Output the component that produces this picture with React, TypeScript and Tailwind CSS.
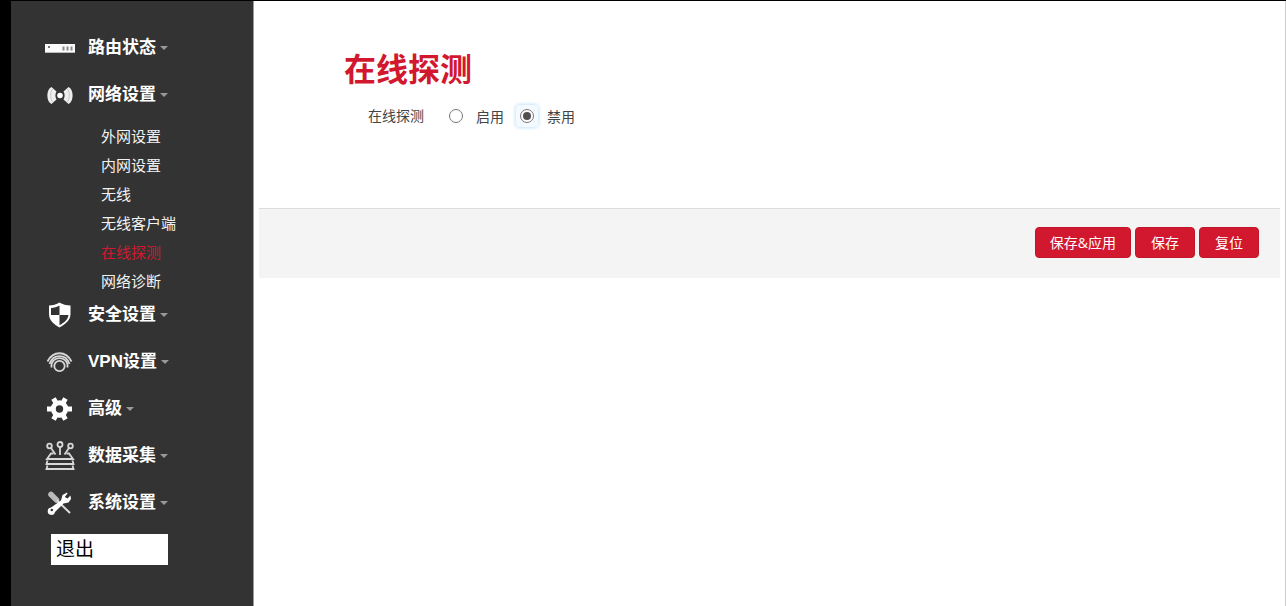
import React from 'react';

const RouterIcon = () => (
  <svg width="30" height="30" viewBox="0 0 30 30">
    <rect x="0" y="11" width="30" height="9" fill="#fafafa" />
    <rect x="3" y="13" width="2" height="2" fill="#777" />
    <path d="M18.500 13.500v4M22.500 13.500v4M26.500 13.500v4" stroke="#888" strokeWidth="2" />
    <path d="M0 19.500h30" stroke="#bbb" />
  </svg>
);

const NetworkIcon = () => (
  <svg width="30" height="30" viewBox="0 0 30 30">
    <circle cx="15" cy="15.500" r="2.800" fill="#fff" />
    <path d="M6.500 7C1 9 1 22 6.500 24L11.500 19.500C10 17 10 14 11.500 11.500Z" fill="#eee" />
    <path d="M23.500 7C29 9 29 22 23.500 24L18.500 19.500C20 17 20 14 18.500 11.500Z" fill="#eee" />
    <path d="M7.500 9C5 12 5 18 7.500 22M22.500 9C25 12 25 18 22.500 22" fill="none" stroke="#bbb" strokeWidth="0.8" />
  </svg>
);

const ShieldIcon = () => (
  <svg width="30" height="30" viewBox="0 0 30 30">
    <path d="M14.500 2.500C11.500 4.500 7.500 5.500 4 5.500V14C4 20.500 9 24.500 14.500 27.500C20 24.500 25.500 20.500 25.500 14V5.500C21.500 5.500 17.500 4.500 14.500 2.500Z" fill="#fff" />
    <path d="M14.500 5.500C12 7 9 7.800 6 8V15H14.500ZM14.500 15H23.500C23 19.500 19.500 22.500 14.500 25.200Z" fill="#333" />
  </svg>
);

const VpnIcon = () => (
  <svg width="30" height="30" viewBox="0 0 30 30" fill="none" stroke="#d8d8d8" strokeWidth="1.800">
    <circle cx="14.500" cy="19" r="5.200" />
    <path d="M6.500 20.500C5 8 24 8 22.500 20.500" />
    <path d="M2.500 14.500C8 3.500 21 3.500 26.500 14.500" />
    <path d="M4.500 17C8 6.500 21 6.500 24.500 17" />
  </svg>
);

const GearIcon = () => (
  <svg width="30" height="30" viewBox="0 0 30 30">
    <circle cx="14.500" cy="15" r="6.200" fill="none" stroke="#fff" strokeWidth="5" />
    <path
      d="M2 15h4M23 15h4M8.500 4.500l2 3.500M18.500 22l2 3.500M20.500 4.500l-2 3.500M10.500 22l-2 3.500"
      stroke="#fff"
      strokeWidth="5"
    />
  </svg>
);

const DataIcon = () => (
  <svg width="30" height="30" viewBox="0 0 30 30" fill="none" stroke="#d8d8d8" strokeWidth="1.800">
    <circle cx="15" cy="3.500" r="2.500" />
    <circle cx="4.500" cy="5" r="2.300" />
    <circle cx="25.500" cy="5" r="2.300" />
    <path d="M15 6v8M6 7l4.500 6.500M24 7l-4.500 6.500" />
    <path d="M8.500 12.500H6L2 18H28L24 12.500H21.500" />
    <path d="M2.500 19.500L1.500 23H28.500L27.500 19.500M2.500 24.500L1.500 28H28.500L27.500 24.500" />
  </svg>
);

const ToolsIcon = () => (
  <svg width="30" height="30" viewBox="0 0 30 30" fill="none">
    <path d="M6 6.500L11.500 12" stroke="#bbb" strokeWidth="5.500" strokeLinecap="round" />
    <path d="M12 12.500L25 25" stroke="#ddd" strokeWidth="2" />
    <path
      d="M22 4.500L17.500 7L16 12.500L6 19.500A3.700 3.700 0 1 0 10 24L18.500 15.500L23.500 14.500L26 11L25.500 7.500L22.500 10.500L19.800 9L22.500 5.500Z"
      fill="#fff"
    />
    <circle cx="6.800" cy="22" r="1.300" fill="#333" />
  </svg>
);

const menus = [
  { id: 'status', name: '路由状态', icon: <RouterIcon /> },
  {
    id: 'network',
    name: '网络设置',
    icon: <NetworkIcon />,
    children: ['外网设置', '内网设置', '无线', '无线客户端', '在线探测', '网络诊断']
  },
  { id: 'security', name: '安全设置', icon: <ShieldIcon /> },
  { id: 'vpn', name: 'VPN设置', icon: <VpnIcon /> },
  { id: 'advanced', name: '高级', icon: <GearIcon /> },
  { id: 'data', name: '数据采集', icon: <DataIcon /> },
  { id: 'system', name: '系统设置', icon: <ToolsIcon /> }
];

const activeItem = '在线探测';

const Sidebar: React.FC = () => (
  <nav className="w-[243px] shrink-0 border-r border-[#999] bg-[#333] pt-[23px] pl-[34px]">
    <ul>
      {menus.map((m) => (
        <li key={m.id}>
          <a href={`#${m.id}`} className="flex h-[47px] items-center text-[17px] font-bold text-white">
            {m.icon}
            <span className="ml-[13px]">{m.name}</span>
            <span className="ml-1 border-x-4 border-t-4 border-x-transparent border-t-[#999]" />
          </a>
          {m.children && (
            <ul className="-mb-[5px] grid auto-rows-[28px] gap-y-px pt-[5px] pl-14 text-[15px]">
              {m.children.map((c) => (
                <li key={c} className="flex items-center">
                  <a href={`#${c}`} className={c === activeItem ? 'text-[#d2182f]' : 'text-[#f2f2f2]'}>
                    {c}
                  </a>
                </li>
              ))}
            </ul>
          )}
        </li>
      ))}
    </ul>
    <button type="button" className="mt-2 ml-[6px] h-[31px] w-[117px] bg-white pl-[5px] text-left text-[19px] leading-[31px] text-black">
      退出
    </button>
  </nav>
);

const radioClass =
  "flex size-[14px] appearance-none items-center justify-center rounded-full border border-[#777] bg-white checked:before:size-2 checked:before:rounded-full checked:before:bg-[#505050] checked:before:content-['']";

const buttonClass = 'h-[31px] min-w-[60px] rounded-sm border border-[#c4162b] bg-[#d2182f] px-3.5 text-sm text-white';

const App: React.FC = () => {
  return (
    <div className="flex min-h-screen border-t border-l-[11px] border-black bg-white font-['Liberation_Sans','Noto_Sans_CJK_SC',sans-serif]">
      <Sidebar />
      <main className="min-w-0 flex-1 border-r border-[#ccc] px-[5px]">
        <form>
          <div className="pt-[45px] pb-20 pl-[85px]">
            <h1 className="text-[32px] leading-[48px] font-bold text-[#d2182f]">在线探测</h1>
            <div role="radiogroup" aria-labelledby="probe-label" className="mt-2.5 flex h-6 items-center pl-6 text-sm text-[#444]">
              <span id="probe-label">在线探测</span>
              <input id="probe-on" type="radio" name="probe" className={`${radioClass} ml-[25px]`} />
              <label htmlFor="probe-on" className="mt-0.5 ml-[13px]">启用</label>
              <span className="ml-3 flex size-[22px] items-center justify-center rounded-sm bg-[#f4faff] shadow-[0_0_4px_#a9d5f5]">
                <input id="probe-off" type="radio" name="probe" defaultChecked className={radioClass} />
              </span>
              <label htmlFor="probe-off" className="mt-0.5 ml-[9px]">禁用</label>
            </div>
          </div>
          <div className="flex justify-end gap-1 border-t border-[#ddd] bg-[#f4f4f4] pt-[18px] pr-[21px] pb-5 font-['Open_Sans','Noto_Sans_CJK_SC',sans-serif]">
            <button type="submit" className={buttonClass}>保存&amp;应用</button>
            <button type="button" className={buttonClass}>保存</button>
            <button type="reset" className={buttonClass}>复位</button>
          </div>
        </form>
      </main>
    </div>
  );
};

export default App;
